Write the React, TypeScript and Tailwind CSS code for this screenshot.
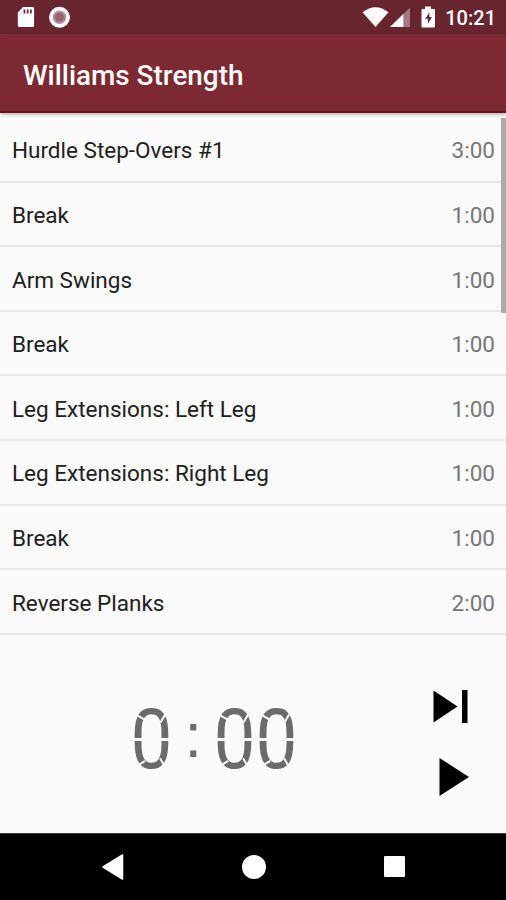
const exercises = [
  { name: "Hurdle Step-Overs #1", time: "3:00" },
  { name: "Break", time: "1:00" },
  { name: "Arm Swings", time: "1:00" },
  { name: "Break", time: "1:00" },
  { name: "Leg Extensions: Left Leg", time: "1:00" },
  { name: "Leg Extensions: Right Leg", time: "1:00" },
  { name: "Break", time: "1:00" },
  { name: "Reverse Planks", time: "2:00" },
];

function StatusBar() {
  return (
    <div className="flex h-[34px] items-center justify-between bg-[#69252e] pr-[10px] pl-[17px] text-white">
      <svg width="54" height="22" viewBox="0 0 54 22">
        <path d="M6 1h9.500a1.600 1.600 0 0 1 1.600 1.600v16.800a1.600 1.600 0 0 1-1.600 1.600h-13A1.600 1.600 0 0 1 .8 19.400V6.500z" fill="#fff" />
        <path d="M6.600 3.500h1.700v4h-1.700zM9.800 3.500h1.700v4h-1.700zM13 3.500h1.700v4H13z" fill="#69252e" />
        <circle cx="42.500" cy="11.300" r="10.500" fill="#fff" />
        <circle cx="42.500" cy="11.300" r="6.700" fill="#b58c94" />
        <circle cx="42.500" cy="11.300" r="4.500" fill="#99636d" />
      </svg>
      <div className="flex items-center">
        <svg width="78" height="24" viewBox="0 0 78 24">
          <path d="M2.500 7.300Q15.500-3 28.500 7.300L15.500 22z" fill="#fff" />
          <path d="M50 2.500V22H30z" fill="#a7777f" />
          <path d="M43.300 9V22H30z" fill="#fff" />
          <path d="M65 1.500h6v2.500h3a1 1 0 0 1 1 1v16.500a1 1 0 0 1-1 1H62.500a1 1 0 0 1-1-1V5a1 1 0 0 1 1-1H65z" fill="#fff" />
          <path d="M69.300 7.500L65.300 13.800h2.600v5l4-6.800h-2.600z" fill="#69252e" />
        </svg>
        <span className="ml-[7px] pt-[2px] text-[20px] leading-none font-medium">10:21</span>
      </div>
    </div>
  );
}

// one character cell of the segmented clock, the strips split it into bars
function Digit({ value }: { value: string }) {
  return (
    <span className="relative flex w-[41.5px] justify-center">
      <span className="scale-x-[0.89]">{value}</span>
      <span className="absolute top-[29px] left-0 h-[3px] w-full bg-[#fafafa]" />
      <span className="absolute top-[7px] left-[3px] h-[1.5px] w-[12px] rotate-[30deg] bg-[#fafafa]" />
      <span className="absolute top-[7px] right-[3px] h-[1.5px] w-[13px] -rotate-[60deg] bg-[#fafafa]" />
      <span className="absolute bottom-[7px] left-[3px] h-[1.5px] w-[12px] -rotate-[30deg] bg-[#fafafa]" />
      <span className="absolute right-[3px] bottom-[7px] h-[1.5px] w-[13px] rotate-[60deg] bg-[#fafafa]" />
    </span>
  );
}

function Timer() {
  return (
    <div className="flex h-[62px] items-center text-[84px] leading-[62px] text-[#6b6b6b]">
      <Digit value="0" />
      <span className="-mt-[10px] w-[41.5px] text-center font-['Liberation_Sans',sans-serif] text-[63px]">:</span>
      <Digit value="0" />
      <Digit value="0" />
    </div>
  );
}

export default function App() {
  return (
    <div className="flex h-[900px] w-[506px] flex-col overflow-hidden bg-[#fafafa] font-['Roboto',sans-serif]">
      <StatusBar />
      <header className="z-10 flex h-[79px] items-center border-b-2 border-[#6b1019] bg-[#7c2932] pl-[23px] shadow-[0_1px_4px_rgba(0,0,0,0.35)]">
        <h1 className="pt-[6px] text-[27.9px] leading-none font-medium text-white">Williams Strength</h1>
      </header>

      <main className="relative h-[522px] pt-[5px]">
        {exercises.map((item, i) => (
          <div
            key={i}
            className="flex h-[64.6px] items-center justify-between border-b-2 border-[#e6e6e6] pt-[4px] pr-[11px] pl-[12px] text-[22.5px]"
          >
            <span className="text-[#202020]">{item.name}</span>
            <span className="text-[#777777]">{item.time}</span>
          </div>
        ))}
        <div className="absolute top-[5px] right-0 h-[195px] w-[5px] bg-[#acacac]" />
      </main>

      <section className="flex h-[198px] items-center justify-between pr-[37px] pl-[131px]">
        <div className="pt-[12px]">
          <Timer />
        </div>
        <div className="flex flex-col items-end gap-[35px] pt-[18px]">
          <svg width="36" height="33" viewBox="0 0 36 33">
            <path d="M.500.500L24.500 16.500.500 32.500zM29 0h5.500v33H29z" />
          </svg>
          <svg width="31" height="38" viewBox="0 0 31 38">
            <path d="M1.500 0L31 19 1.500 38z" />
          </svg>
        </div>
      </section>

      <nav className="flex h-[67px] items-center justify-between border-t border-[#3a3a3a] bg-black pr-[101px] pb-px pl-[102px]">
        <svg width="22" height="26" viewBox="0 0 22 26">
          <path d="M20.500 1v24L1 13z" fill="#fff" stroke="#fff" strokeWidth="1.500" strokeLinejoin="round" />
        </svg>
        <span className="-ml-px size-[24px] rounded-full bg-white" />
        <span className="size-[21px] rounded-[1px] bg-white" />
      </nav>
    </div>
  );
}
